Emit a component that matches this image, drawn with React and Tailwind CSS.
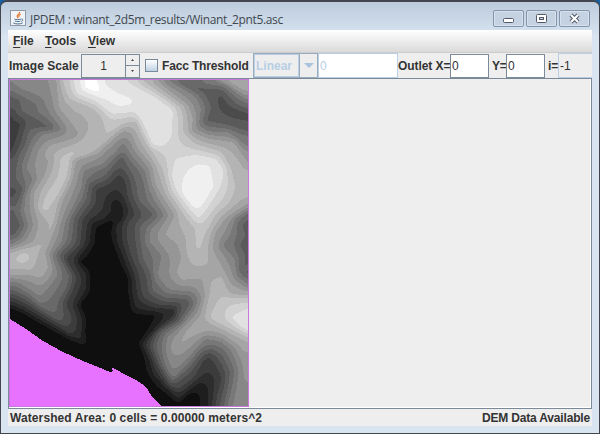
import React, { useMemo } from "react";

// Elevation samples on a 12px lattice, west to east, north to south (0-255).
const ELEVATION = [
  [150, 140, 130, 140, 165, 190, 225, 250, 225, 205, 205, 165, 150, 130, 120, 125, 130, 130, 160, 185, 190],
  [115, 120, 125, 125, 150, 175, 215, 248, 235, 235, 230, 220, 190, 160, 145, 110, 100, 95, 105, 130, 150],
  [85, 115, 115, 120, 150, 175, 200, 220, 225, 240, 235, 225, 222, 205, 165, 140, 105, 80, 80, 90, 110],
  [75, 80, 95, 120, 140, 165, 175, 190, 205, 210, 205, 215, 222, 220, 185, 150, 115, 90, 75, 65, 70],
  [55, 80, 90, 95, 120, 165, 180, 180, 205, 175, 150, 190, 215, 222, 195, 160, 125, 110, 120, 120, 100],
  [60, 90, 115, 135, 150, 160, 175, 190, 165, 130, 115, 170, 215, 220, 200, 180, 155, 145, 150, 150, 130],
  [65, 100, 140, 175, 190, 195, 175, 150, 120, 90, 95, 140, 190, 205, 215, 215, 205, 195, 185, 170, 150],
  [75, 110, 150, 180, 195, 185, 150, 130, 95, 60, 75, 110, 160, 200, 222, 235, 240, 225, 210, 190, 165],
  [85, 110, 140, 185, 195, 175, 135, 90, 65, 45, 60, 90, 140, 195, 225, 245, 248, 230, 210, 190, 170],
  [80, 105, 145, 190, 190, 150, 110, 70, 50, 35, 45, 75, 120, 180, 220, 248, 250, 230, 210, 190, 175],
  [120, 115, 155, 195, 185, 150, 120, 85, 50, 30, 45, 100, 145, 190, 225, 242, 242, 222, 200, 180, 165],
  [100, 110, 150, 185, 165, 130, 100, 75, 50, 25, 35, 65, 115, 170, 205, 228, 225, 205, 180, 155, 130],
  [75, 100, 150, 180, 150, 115, 75, 35, 18, 30, 45, 65, 110, 155, 175, 205, 215, 190, 160, 120, 90],
  [100, 130, 165, 170, 150, 125, 80, 35, 13, 25, 55, 90, 150, 170, 155, 175, 205, 170, 140, 115, 95],
  [150, 170, 175, 150, 135, 105, 60, 25, 13, 20, 45, 80, 125, 155, 170, 185, 195, 170, 130, 110, 75],
  [185, 200, 180, 155, 120, 75, 25, 13, 13, 15, 35, 70, 110, 125, 165, 185, 190, 175, 150, 120, 90],
  [165, 165, 160, 150, 120, 85, 50, 13, 13, 13, 25, 60, 105, 135, 165, 165, 165, 165, 155, 125, 100],
  [120, 120, 130, 145, 115, 90, 55, 18, 13, 13, 18, 45, 95, 125, 145, 145, 160, 175, 180, 150, 130],
  [70, 95, 110, 125, 95, 70, 30, 13, 13, 13, 15, 35, 60, 90, 105, 110, 145, 180, 190, 180, 165],
  [20, 60, 90, 110, 85, 55, 20, 13, 13, 13, 15, 35, 45, 70, 85, 115, 150, 185, 205, 215, 215],
  [8, 20, 50, 75, 75, 55, 20, 13, 13, 13, 13, 18, 40, 70, 105, 140, 170, 195, 210, 225, 225],
  [13, 13, 13, 25, 50, 45, 25, 13, 13, 13, 13, 45, 75, 110, 150, 165, 165, 165, 180, 195, 205],
  [13, 13, 13, 13, 13, 15, 30, 13, 13, 13, 13, 50, 85, 130, 165, 150, 120, 110, 125, 150, 165],
  [13, 13, 13, 13, 13, 13, 13, 13, 13, 13, 13, 35, 80, 130, 145, 110, 80, 70, 95, 125, 150],
  [13, 13, 13, 13, 13, 13, 13, 13, 13, 13, 13, 25, 70, 130, 110, 75, 50, 35, 75, 115, 145],
  [13, 13, 13, 13, 13, 13, 13, 13, 13, 13, 13, 15, 40, 80, 75, 45, 30, 30, 75, 115, 145],
  [13, 13, 13, 13, 13, 13, 13, 13, 13, 13, 13, 13, 13, 35, 35, 15, 20, 45, 80, 125, 160],
  [13, 13, 13, 13, 13, 13, 13, 13, 13, 13, 13, 13, 13, 15, 13, 13, 25, 60, 100, 130, 160],
];
const CELL = 12;
const MAP_W = 238;
const MAP_H = 326;

// Surveyed contour lines: [elevation, "x,y x,y ..."] in third-of-a-pixel
// units, offset by the 6-unit frame.
const CONTOURS = [
  // central basin
  [18, "6,690 40,705 110,745 180,785 240,805 243,800 232,760 235,710 215,680 248,640 245,575 215,550 240,540 265,490 265,450 290,435 312,428 302,470 315,510 335,560 358,600 358,650 368,710 435,712 415,750 388,795 403,830 410,880 440,925 480,955 510,978 535,950 560,945 568,965 562,984"],
  [37, "6,678 40,692 110,732 180,772 222,790 222,720 205,680 235,630 235,590 205,545 245,490 250,432 285,425 308,400 305,370 330,360 345,385 345,425 320,440 325,490 345,540 368,600 370,640 378,690 430,700 495,700 460,730 400,795 425,850 435,890 480,935 510,965 560,920 580,910 600,930 600,984"],
  [67, "6,655 60,680 120,718 190,760 195,715 170,680 190,640 205,600 170,540 215,500 220,425 262,375 262,330 300,320 335,285 350,310 355,350 378,410 350,430 350,480 365,530 390,590 395,640 400,660 450,680 510,680 500,720 440,760 420,800 445,860 480,920 510,935 560,895 580,850 603,830 620,860 640,900 625,950 620,984"],
  [97, "6,632 50,650 100,690 155,720 150,670 175,630 185,590 150,530 190,490 195,420 235,360 240,315 290,295 320,255 340,230 355,260 375,300 380,340 395,375 440,410 390,440 395,490 400,540 430,590 430,640 470,660 540,660 545,680 510,730 460,760 440,800 460,860 490,910 540,870 580,820 610,810 640,830 665,880 655,940 645,984"],
  [127, "6,608 30,612 70,640 95,665 110,640 150,590 130,530 160,490 170,430 200,370 220,330 225,275 280,260 325,220 345,190 365,230 410,280 420,330 440,370 470,410 425,450 420,490 460,530 440,590 480,635 550,640 570,660 560,690 520,740 475,775 470,810 480,860 495,890 540,840 590,780 640,790 670,820 690,880 680,930 665,984"],
  [157, "6,590 70,590 95,610 125,570 110,520 120,500 145,430 160,370 190,310 200,245 270,225 310,185 345,155 370,165 385,210 430,260 440,320 480,380 500,410 465,470 510,500 520,540 500,580 515,610 580,600 590,650 575,710 530,750 500,800 500,820 550,780 600,755 640,765 690,800 715,850 719,900"],
  // western shoulder and tongue
  [187, "160,6 180,60 260,90 285,120 290,155 250,190 200,215 155,235 150,290 110,350 97,390 115,400 150,350 180,290 185,235 230,225 300,170 345,135 385,125 400,170 430,220 465,280 480,340 520,400 560,450 555,500 565,530 580,520 590,470 620,410 665,370 680,330 665,270 640,220 560,195 525,160 525,120 520,90 480,60 430,25 400,6"],
  [173, "215,100 245,130 240,165"],
  [194, "185,225 165,270 150,320 108,390"],
  // northern ridge
  [219, "195,6 205,45 260,65 310,105 380,98 410,150 430,200 460,203 490,170 495,95 440,55 380,25 330,6"],
  [226, "430,80 450,120 450,180"],
  [234, "215,6 222,35 260,50 300,64 330,82 365,77 370,65 330,50 290,25 275,6"],
  [252, "230,6 232,26 270,38 268,22 255,6"],
  // eastern summit
  [219, "500,245 490,290 500,330 530,370 570,420 600,380 640,310 645,270 620,240 560,230 500,245"],
  [235, "570,262 600,265 605,300 612,325 575,385 555,388 522,345 525,310 545,280 570,262"],
  [242, "575,285 570,340"],
  // north-eastern valley
  [157, "445,6 500,50 540,80 555,120 550,160 600,180 680,190 719,260"],
  [127, "475,6 560,50 580,90 570,140 600,160 660,160 719,210"],
  [97, "515,6 590,50 610,85 590,130 640,135 719,160"],
  [75, "635,55 650,90 719,115"],
  [97, "560,22 640,32 680,75 719,92"],
  [127, "590,6 650,15 700,55 719,65"],
  [157, "640,6 690,30 719,45"],
  // western valley
  [67, "6,100 20,130 40,130 20,200 6,230"],
  [97, "6,45 15,60 35,60 35,100 95,125 130,150 60,150 50,200 30,230 20,300 45,330 20,400 38,440 20,470 6,475"],
  [76, "6,340 20,335 6,355"],
  [127, "6,10 40,40 100,60 125,110 165,155 100,165 75,200 50,270 75,300 50,350 45,400 60,440 40,480 6,500"],
  [114, "50,55 90,70 90,105"],
  [157, "145,6 150,90 215,165 200,180 120,200 105,230 125,250 110,290 75,340 75,380 90,440 75,490 6,515"],
  [174, "90,500 6,524"],
  [193, "28,540 45,526 60,535 45,547 30,547 28,540"],
  [174, "6,570 70,572 90,520 135,440 145,390"],
  // eastern valley
  [157, "719,375 650,420 620,460 610,510 640,560 670,620 719,640"],
  [127, "719,395 680,420 665,470 640,500 680,540 685,590 719,620"],
  [97, "719,410 695,440 710,470 690,500 710,530 697,570 719,595"],
  // south-eastern rise
  [174, "719,650 660,650 640,595 610,610 600,660 590,720 620,740 680,770 719,790"],
  [195, "719,665 650,660 610,715 650,735 719,770"],
  [219, "719,690 670,715 690,740 719,760"],
];

const cubic = (a, b, c, d, t) =>
  b + 0.5 * t * (c - a + t * (2 * a - 5 * b + 4 * c - d + t * (3 * (b - c) + d - a)));

const sample = (r, c) =>
  ELEVATION[Math.max(0, Math.min(27, r))][Math.max(0, Math.min(20, c))];

function coarseHeight(x, y) {
  const gx = x / CELL;
  const gy = y / CELL;
  const c = Math.floor(gx);
  const r = Math.floor(gy);
  const rows = [-1, 0, 1, 2].map((k) =>
    cubic(sample(r + k, c - 1), sample(r + k, c), sample(r + k, c + 1), sample(r + k, c + 2), gx - c)
  );
  return Math.max(10, Math.min(255, cubic(...rows, gy - r)));
}

const neighbourMean = (h, x, y) => {
  const i = y * MAP_W + x;
  return (
    (h[x > 0 ? i - 1 : i] +
      h[x < MAP_W - 1 ? i + 1 : i] +
      h[y > 0 ? i - MAP_W : i] +
      h[y < MAP_H - 1 ? i + MAP_W : i]) / 4
  );
};

// Relax the coarse surface towards a smooth one that passes through the contours.
function buildHeights() {
  const n = MAP_W * MAP_H;
  const base = new Float32Array(n);
  let h = new Float32Array(n);
  const fixed = new Uint8Array(n);
  for (let y = 0; y < MAP_H; y++)
    for (let x = 0; x < MAP_W; x++) base[y * MAP_W + x] = h[y * MAP_W + x] = coarseHeight(x, y);

  for (const [level, line] of CONTOURS) {
    const pts = line.split(" ").map((p) => p.split(",").map((v) => (Number(v) - 6) / 3));
    for (let i = 1; i < pts.length; i++) {
      const [x0, y0] = pts[i - 1];
      const [x1, y1] = pts[i];
      const steps = Math.ceil(Math.hypot(x1 - x0, y1 - y0) * 2);
      for (let s = 0; s <= steps; s++) {
        const x = Math.max(0, Math.min(MAP_W - 1, Math.round(x0 + ((x1 - x0) * s) / steps)));
        const y = Math.max(0, Math.min(MAP_H - 1, Math.round(y0 + ((y1 - y0) * s) / steps)));
        h[y * MAP_W + x] = level;
        fixed[y * MAP_W + x] = 1;
      }
    }
  }
  for (let pass = 0; pass < 140; pass++) {
    for (let y = 0; y < MAP_H; y++) {
      for (let x = 0; x < MAP_W; x++) {
        const i = y * MAP_W + x;
        if (fixed[i]) continue;
        const mean = neighbourMean(h, x, y);
        const target = mean + 0.003 * (base[i] - mean);
        h[i] += 1.6 * (target - h[i]);
      }
    }
  }
  // Round off the creases left along the contour lines.
  for (let pass = 0; pass < 7; pass++) {
    const next = new Float32Array(n);
    for (let y = 0; y < MAP_H; y++)
      for (let x = 0; x < MAP_W; x++) {
        const i = y * MAP_W + x;
        next[i] = 0.35 * h[i] + 0.65 * neighbourMean(h, x, y);
      }
    h = next;
  }
  return h;
}

// One path per elevation band, built from horizontal runs of equal band.
function buildBands() {
  const h = buildHeights();
  const bandAt = (x, y) => Math.max(1, Math.min(17, Math.round(h[y * MAP_W + x] / 15)));
  const paths = {};
  for (let y = 0; y < MAP_H; y++) {
    let start = 0;
    let band = bandAt(0, y);
    for (let x = 1; x <= MAP_W; x++) {
      const next = x < MAP_W ? bandAt(x, y) : -1;
      if (next !== band) {
        paths[band] = (paths[band] || "") + `M${start} ${y}h${x - start}v1h${start - x}z`;
        start = x;
        band = next;
      }
    }
  }
  return Object.entries(paths);
}

function Terrain() {
  const bands = useMemo(buildBands, []);
  return (
    <svg width={MAP_W} height={MAP_H} viewBox={`0 0 ${MAP_W} ${MAP_H}`} shapeRendering="crispEdges" className="block">
      {bands.map(([band, d]) => {
        const g = Number(band) * 15;
        return <path key={band} d={d} fill={`rgb(${g},${g},${g})`} />;
      })}
      <path
        fill="#e772ff"
        d="M0 239L16 249L33 261L53 272L73 281L88 287L100 292L103 291L102 288L105 289L118 296L126 300L132 304L138 310L142 317L147 321L151 326H0z"
      />
    </svg>
  );
}

function JavaIcon() {
  return (
    <svg width="16" height="16" viewBox="0 0 16 16" className="block">
      <rect x="0.5" y="0.5" width="15" height="15" fill="#f1f4f7" stroke="#8e9aa8" />
      <path d="M9.6 1.8C10 4 6.4 4.8 7.2 6.6L8 8.2M10.9 4.2C8.7 5 8.5 6 9.2 7.1" fill="none" stroke="#e5762b" strokeWidth="1.2" />
      <path d="M4.4 9.1C6 9.9 9 9.8 11 9M5 11C7 11.8 9 11.7 10.4 11M3.2 12.8C5 14.4 11 14.3 12.7 12.8M11.5 9.2C13.6 8.8 13.2 11 11.3 11.4" fill="none" stroke="#4d708f" strokeWidth="1" />
    </svg>
  );
}

function TitleButton({ children }) {
  return (
    <div className="flex h-[17px] w-[31px] items-center justify-center rounded-[2px] border border-[#8494ac] bg-[#c4d2e2] shadow-[inset_0_0_0_1px_#d7e2ee]">
      <svg width="13" height="11" viewBox="0 0 13 11" className="block">{children}</svg>
    </div>
  );
}

function Menu({ hot, rest, className }) {
  return (
    <span className={className}>
      <span className="underline underline-offset-2">{hot}</span>
      {rest}
    </span>
  );
}

function TitleBar() {
  return (
    <header className="flex h-[29px] items-start pr-[2px] pl-[2px]">
      <div className="mt-[8px]"><JavaIcon /></div>
      <span className="mt-[9px] ml-1 w-[256px] whitespace-nowrap font-['Open_Sans','Noto_Sans',sans-serif] text-[12px] leading-[18px] tracking-[-0.34px] text-[#41474f]">
        JPDEM : winant_2d5m_results/Winant_2pnt5.asc
      </span>
      <div className="mt-[8px] ml-auto flex gap-[2px]">
        <TitleButton>
          <rect x="1.5" y="5.5" width="10" height="4" rx="1" fill="#fff" stroke="#535968" />
        </TitleButton>
        <TitleButton>
          <rect x="1.5" y="1.5" width="10" height="8" rx="1" fill="#fff" stroke="#535968" />
          <rect x="4.5" y="4.5" width="4" height="2" fill="#c4d2e2" stroke="#535968" />
        </TitleButton>
        <TitleButton>
          <path d="M3 2L10 9M10 2L3 9" stroke="#535968" strokeWidth="4.2" />
          <path d="M3 2L10 9M10 2L3 9" stroke="#fff" strokeWidth="2.1" />
        </TitleButton>
      </div>
    </header>
  );
}

function Toolbar() {
  return (
    <div className="flex h-[25px] items-center overflow-hidden whitespace-nowrap">
      <span className="w-[73px] pl-px tracking-[0.03px]">Image Scale</span>
      <div className="flex h-[24px] w-[59px] border border-[#7a8a99]">
        <span className="w-[43px] pt-px text-center leading-[21px] font-normal">1</span>
        <div className="flex grow flex-col border-l border-[#7a8a99]">
          <div className="flex h-[11px] items-center justify-center border-b border-[#7a8a99]">
            <svg width="3" height="2" viewBox="0 0 3 2"><path d="M0 2L1.5 0L3 2z" fill="#444" /></svg>
          </div>
          <div className="flex h-[11px] items-center justify-center">
            <svg width="3" height="2" viewBox="0 0 3 2"><path d="M0 0L1.5 2L3 0z" fill="#444" /></svg>
          </div>
        </div>
      </div>
      <span className="ml-[5px] h-[13px] w-[13px] border border-[#7a8a99] bg-linear-to-b from-white to-[#bed2e5]" />
      <span className="ml-1 w-[91px] tracking-[-0.15px]">Facc Threshold</span>
      <div className="flex h-[25px] w-[65px] border border-[#9aabbc] text-[#b8cfe5]">
        <span className="w-[45px] border border-[#b8cfe5] pl-[1px] leading-[23px]">Linear</span>
        <span className="flex grow items-center justify-center border-l border-[#9aabbc]">
          <svg width="10" height="5" viewBox="0 0 10 5"><path d="M0 0H10L5 5z" fill="#a9c3df" /></svg>
        </span>
      </div>
      <span className="h-[25px] w-[80px] border border-[#b8cfe5] bg-white pl-[1px] leading-[25px] font-normal text-[#b8cfe5]">0</span>
      <span className="w-[52px] tracking-[-0.06px]">Outlet X=</span>
      <span className="h-[24px] w-[39px] border border-[#7a8a99] bg-white pl-[1px] leading-[22px] font-normal">0</span>
      <span className="w-[17px] pl-[3px] tracking-[-0.3px]">Y=</span>
      <span className="h-[24px] w-[39px] border border-[#7a8a99] bg-white pl-[1px] leading-[22px] font-normal">0</span>
      <span className="w-[13px] pl-[3px]">i=</span>
      <span className="h-[25px] grow border border-r-0 border-[#b8cfe5] pl-[1px] leading-[25px] font-normal">-1</span>
    </div>
  );
}

export default function App() {
  return (
    <div className="h-[434px] w-[600px] overflow-hidden bg-[#1761a8]">
      <div className="h-[434px] w-[600px] rounded-t-[7px] border border-t-2 border-[#44454e] bg-linear-to-b from-[#bccbdc] via-[#d8e4f0] via-[8%] to-[#d8e4f0] px-[7px] pb-[7px]">
        <TitleBar />
        <div className="mt-[-1px] flex h-[396px] w-[584px] flex-col bg-[#eeeeee] font-['Liberation_Sans',Arial,sans-serif] text-[12px] font-bold text-[#333333]">
          <nav className="flex h-[23px] items-center border-b border-[#cccccc] bg-linear-to-b from-white to-[#dadada] pl-[5px]">
            <Menu hot="F" rest="ile" className="w-[32px]" />
            <Menu hot="T" rest="ools" className="w-[43px]" />
            <Menu hot="V" rest="iew" />
          </nav>
          <Toolbar />
          <main className="h-[331px] border border-[#7a8a99] shadow-[inset_-1px_-1px_0_#ffffff]">
            <div className="h-[328px] w-[240px] border border-[#c878dc]">
              <Terrain />
            </div>
          </main>
          <footer className="flex h-[17px] items-center justify-between pr-[2px] pl-[2px]">
            <span className="tracking-[0.1px]">Watershed Area: 0 cells = 0.00000 meters^2</span>
            <span className="tracking-[-0.17px]">DEM Data Available</span>
          </footer>
        </div>
      </div>
    </div>
  );
}
